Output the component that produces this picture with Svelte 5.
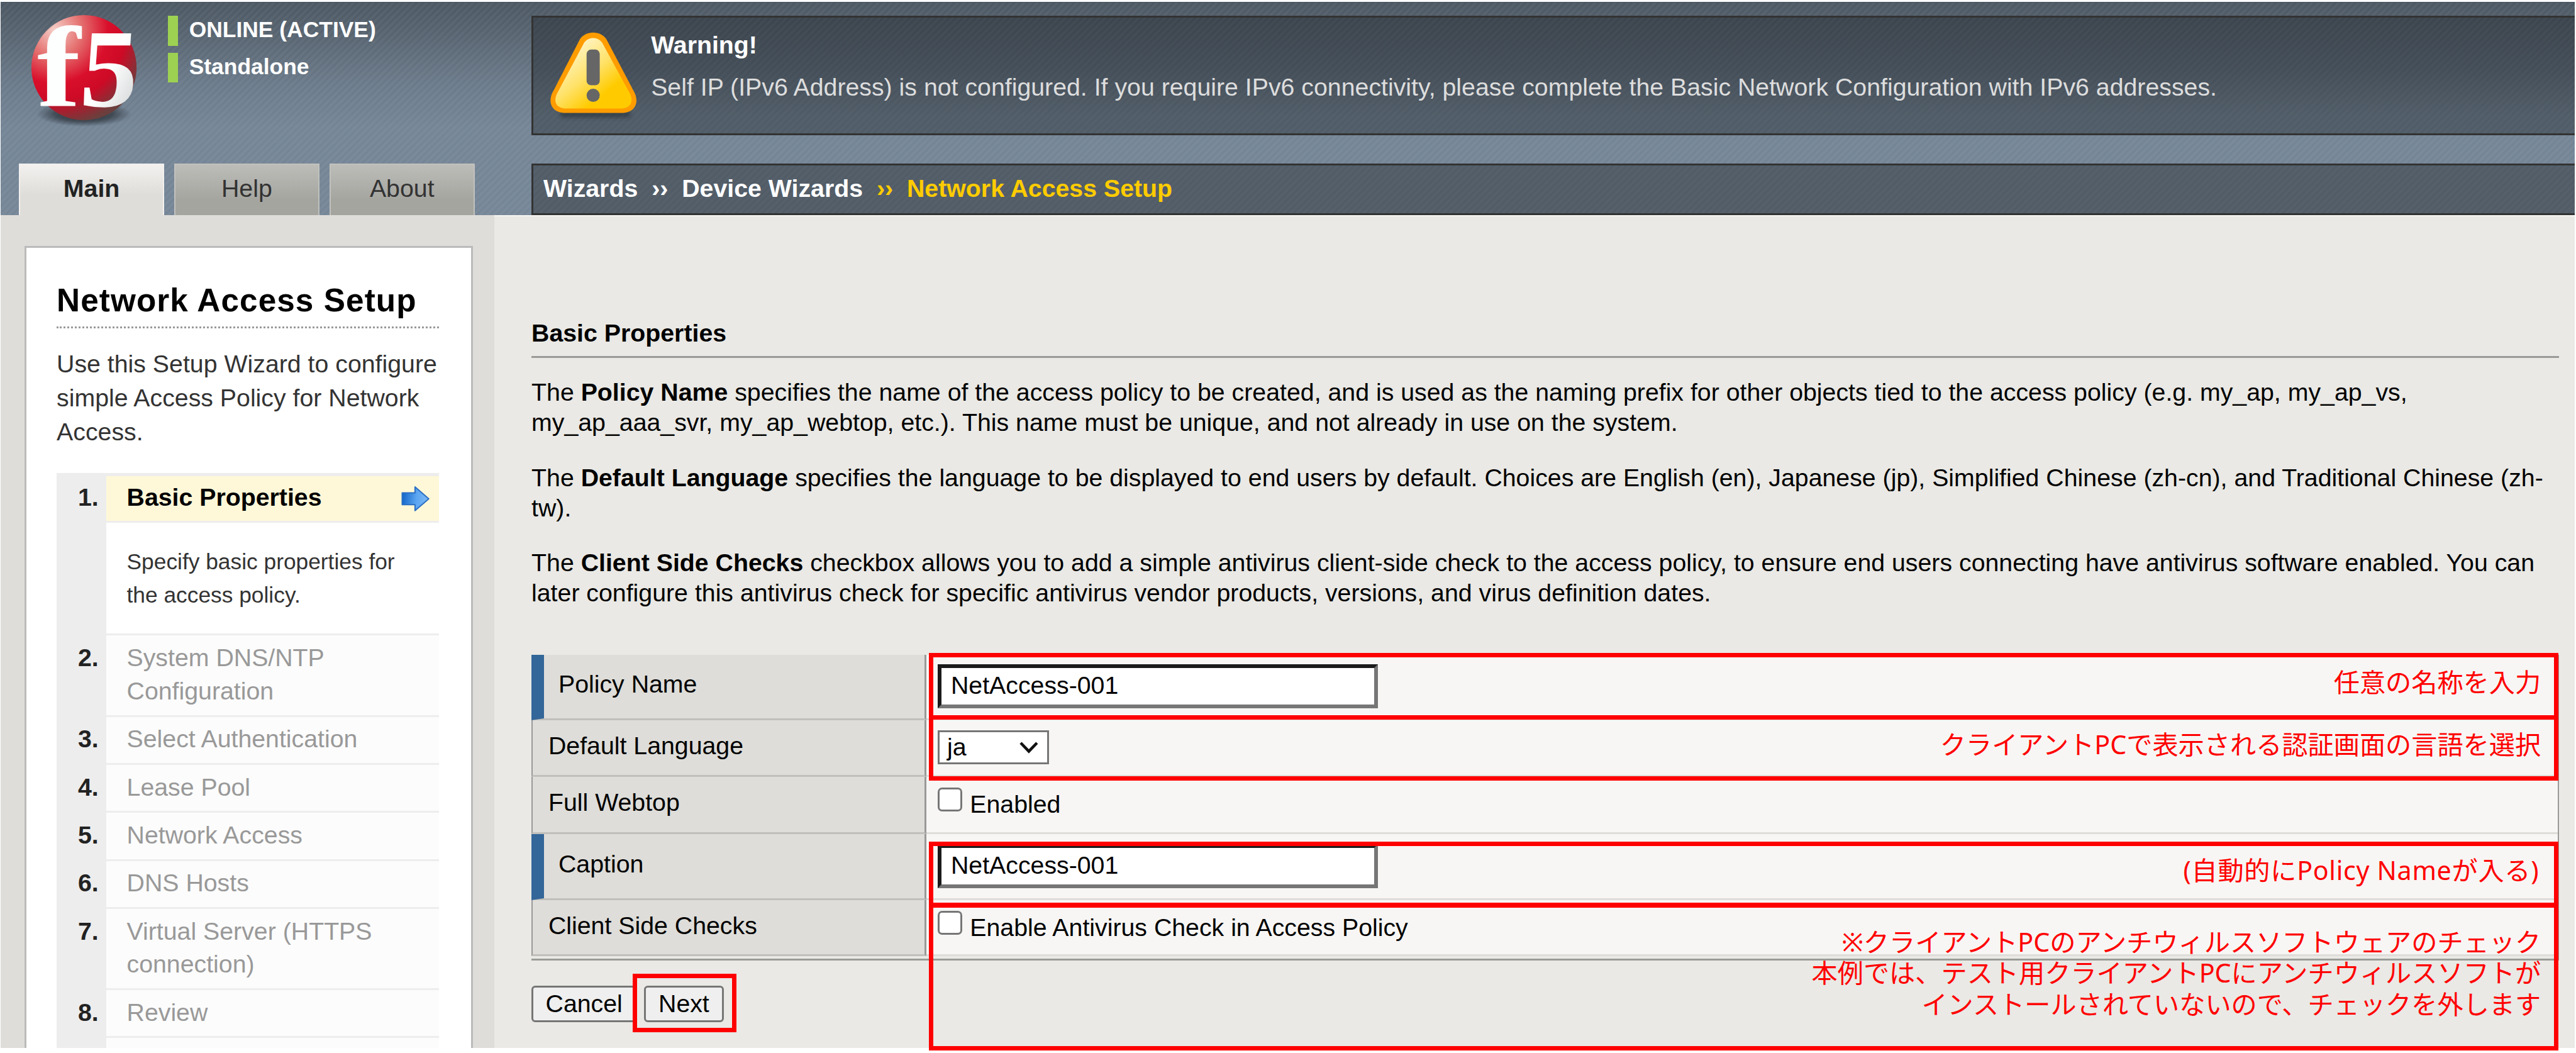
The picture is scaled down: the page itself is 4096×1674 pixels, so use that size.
<script>
  const statuses = ['ONLINE (ACTIVE)', 'Standalone'];
  const tabs = ['Main', 'Help', 'About'];

  const steps = [
    ['System DNS/NTP', 'Configuration'],
    ['Select Authentication'],
    ['Lease Pool'],
    ['Network Access'],
    ['DNS Hosts'],
    ['Virtual Server (HTTPS', 'connection)'],
    ['Review'],
    []
  ];

  const help = [
    {
      term: 'Policy Name',
      first: 'specifies the name of the access policy to be created, and is used as the naming prefix for other objects tied to the access policy (e.g. my_ap, my_ap_vs,',
      second: 'my_ap_aaa_svr, my_ap_webtop, etc.). This name must be unique, and not already in use on the system.'
    },
    {
      term: 'Default Language',
      first: 'specifies the language to be displayed to end users by default. Choices are English (en), Japanese (jp), Simplified Chinese (zh-cn), and Traditional Chinese (zh-',
      second: 'tw).'
    },
    {
      term: 'Client Side Checks',
      first: 'checkbox allows you to add a simple antivirus client-side check to the access policy, to ensure end users connecting have antivirus software enabled. You can',
      second: 'later configure this antivirus check for specific antivirus vendor products, versions, and virus definition dates.'
    }
  ];

  const fields = [
    { label: 'Policy Name', kind: 'text', value: 'NetAccess-001', required: true },
    { label: 'Default Language', kind: 'select', value: 'ja', size: 'mid' },
    { label: 'Full Webtop', kind: 'check', value: 'Enabled', size: 'mid2' },
    { label: 'Caption', kind: 'text', value: 'NetAccess-001', required: true },
    { label: 'Client Side Checks', kind: 'check', value: 'Enable Antivirus Check in Access Policy', size: 'last' }
  ];
</script>

<div class="page">
  <header>
    <div class="brand-col">
      <div class="brand">
        <svg class="logo" viewBox="0 0 180 180" width="180" height="180">
          <defs>
            <radialGradient id="ball" cx="0.22" cy="0.14" r="0.92">
              <stop offset="0" stop-color="#f6cfc9" />
              <stop offset="0.28" stop-color="#e4706f" />
              <stop offset="0.55" stop-color="#d90f2b" />
              <stop offset="0.74" stop-color="#cd0a26" />
              <stop offset="1" stop-color="#6b3f3d" />
            </radialGradient>
            <linearGradient id="letters" x1="0" y1="0" x2="1" y2="1">
              <stop offset="0.5" stop-color="#ffffff" />
              <stop offset="1" stop-color="#c9cccd" />
            </linearGradient>
            <radialGradient id="shade">
              <stop offset="0" stop-color="#20262c" stop-opacity="0.95" />
              <stop offset="0.6" stop-color="#20262c" stop-opacity="0.6" />
              <stop offset="1" stop-color="#20262c" stop-opacity="0" />
            </radialGradient>
          </defs>
          <ellipse cx="89" cy="158" rx="76" ry="20" fill="url(#shade)" />
          <circle cx="89" cy="84" r="84" fill="url(#ball)" />
          <g class="mark">
            <text transform="translate(14 146) scale(1.14 1)" font-size="183" fill="#fdfefe">f</text>
            <text transform="translate(80 146) skewX(-4) scale(1.03 1)" font-size="178" fill="url(#letters)">5</text>
          </g>
        </svg>
        <div class="statuses">
          {#each statuses as s}
            <div class="status">{s}</div>
          {/each}
        </div>
      </div>
      <nav class="tabs">
        {#each tabs as t, i}
          <span class="tab" class:active={i === 0}>{t}</span>
        {/each}
      </nav>
    </div>

    <div class="info-col">
      <div class="alert">
        <svg class="warn" viewBox="0 0 144 144" width="144" height="144">
          <defs>
            <linearGradient id="amber" x1="0.15" y1="0.1" x2="0.8" y2="0.85">
              <stop offset="0.1" stop-color="#fff3c0" />
              <stop offset="0.5" stop-color="#ffe26a" />
              <stop offset="0.85" stop-color="#ffcb00" />
            </linearGradient>
            <filter id="soft" x="-10%" y="-200%" width="120%" height="500%"><feGaussianBlur stdDeviation="3" /></filter>
          </defs>
          <rect x="18" y="128" width="112" height="9" rx="4" fill="#222a31" opacity="0.6" filter="url(#soft)" />
          <path d="M49 13 C58 -2 83 -2 92 13 L134 93 C146 112 138 129 119 130 L23 130 C4 129 -4 112 8 93 Z" fill="#ff9c00" />
          <path d="M56 18 C63 8 78 8 85 18 L128 97 C136 111 131 122 117 123 L25 123 C11 122 6 111 14 97 Z" fill="url(#amber)" />
          <rect x="60" y="29" width="21" height="57" rx="7" fill="#666666" />
          <circle cx="70.500" cy="102" r="10.500" fill="#666666" />
        </svg>
        <div class="alert-text">
          <strong>Warning!</strong>
          <span class="msg">Self IP (IPv6 Address) is not configured. If you require IPv6 connectivity, please complete the Basic Network Configuration with IPv6 addresses.</span>
        </div>
      </div>
      <div class="crumbs">
        <span>Wizards</span><span class="sep">››</span><span>Device Wizards</span><span class="sep current">››</span><span class="current">Network Access Setup</span>
      </div>
    </div>
  </header>

  <div class="body">
    <aside>
      <section class="panel">
        <h1>Network Access Setup</h1>
        <p class="intro">Use this Setup Wizard to configure<br />simple Access Policy for Network<br />Access.</p>
        <ol>
          <li class="open">
            <span class="num">1.</span>
            <div>
              <div class="now">
                <span>Basic Properties</span>
                <svg viewBox="0 0 46 42" width="46" height="42">
                  <defs>
                    <linearGradient id="blue" x1="0" y1="0.4" x2="1" y2="0.5">
                      <stop offset="0" stop-color="#1266c8" />
                      <stop offset="0.55" stop-color="#5ca6f2" />
                      <stop offset="1" stop-color="#7db8f3" />
                    </linearGradient>
                  </defs>
                  <path d="M1.500 11.500 H22 V2 L44 21 L22 40 V30.500 H1.500 Z" fill="url(#blue)" stroke="#2a6fc4" stroke-width="2" stroke-linejoin="round" />
                </svg>
              </div>
              <p class="desc">Specify basic properties for<br />the access policy.</p>
            </div>
          </li>
          {#each steps as lines, i}
            <li>
              <span class="num">{lines.length ? `${i + 2}.` : ''}</span>
              <div class="step">{#each lines as l}<div>{l}</div>{/each}</div>
            </li>
          {/each}
        </ol>
      </section>
    </aside>

    <main>
      <h2>Basic Properties</h2>
      {#each help as h}
        <p class="help">The <b>{h.term}</b> {h.first}<br />{h.second}</p>
      {/each}

      <div class="form">
        {#each fields as f}
          <div class="row {f.size ?? ''}">
            <div class="label" class:required={f.required}>{f.label}</div>
            <div class="value">
              {#if f.kind === 'text'}
                <div class="input">{f.value}</div>
              {:else if f.kind === 'select'}
                <div class="select">
                  <span>{f.value}</span>
                  <svg viewBox="0 0 32 20" width="32" height="20"><path d="M3 3 L16 16.500 L29 3" fill="none" stroke="#111" stroke-width="4.500" /></svg>
                </div>
              {:else}
                <div class="check"></div><span class="check-label">{f.value}</span>
              {/if}
            </div>
          </div>
        {/each}
      </div>

      <div class="actions">
        <span class="btn cancel">Cancel</span>
        <span class="btn">Next</span>
      </div>
    </main>
  </div>

  <div class="note n1">任意の名称を入力</div>
  <div class="note n2">クライアントPCで表示される認証画面の言語を選択</div>
  <div class="note n3">(自動的にPolicy Nameが入る)</div>
  <div class="note n4">※クライアントPCのアンチウィルスソフトウェアのチェック<br />本例では、テスト用クライアントPCにアンチウィルスソフトが<br />インストールされていないので、チェックを外します</div>
  <div class="note n5"></div>
</div>

<style>
  :global(body) { background: #fff; overflow: hidden; }
  .page {
    zoom: 0.99538;
    position: relative;
    box-sizing: border-box;
    width: 4115px;
    height: 1682px;
    padding: 3px 2px 8px 1px;
    overflow: hidden;
    background: #fff;
    font-family: 'Liberation Sans', Arial, sans-serif;
    font-size: 39.480px;
    color: #000;
    white-space: nowrap;
    display: flex;
    flex-direction: column;
  }
  .page :global(*) { box-sizing: border-box; }
  h1, h2, p, ol { margin: 0; padding: 0; }
  svg { display: block; flex: none; overflow: visible; }

  header {
    flex: none;
    height: 341px;
    display: grid;
    grid-template-columns: 848px 1fr;
    background:
      repeating-linear-gradient(135deg, rgba(255, 255, 255, 0.045) 0 3px, rgba(255, 255, 255, 0) 4px 6.500px, rgba(255, 255, 255, 0.045) 7.500px),
      linear-gradient(#4c5863 0, #5b6875 65px, #6b7a8a 130px, #748596 200px, #758697 341px);
    border-top: 1.100px solid #48535d;
  }
  .brand-col { display: flex; flex-direction: column; justify-content: space-between; }
  .brand { display: flex; padding: 20px 0 0 44px; }
  .mark { font-family: 'Liberation Serif', 'Times New Roman', serif; font-weight: bold; }
  .statuses { display: flex; flex-direction: column; gap: 11px; padding: 1px 0 0 43px; }
  .status {
    height: 48px;
    line-height: 45px;
    padding-left: 18px;
    border-left: 16.100px solid #9dd152;
    color: #fff;
    font-weight: bold;
    font-size: 35.600px;
  }
  .tabs { display: flex; gap: 15.500px; padding-left: 29px; }
  .tab {
    width: 232.500px;
    height: 83px;
    line-height: 74.500px;
    text-align: center;
    color: #333;
    border: 2.100px solid #c2c1bd;
    border-bottom: none;
    background: linear-gradient(#bcbcb8, #a5a5a0 70%);
  }
  .tab.active {
    font-weight: bold;
    color: #222;
    border-color: #f1f0ee;
    background: linear-gradient(#f2f1ef, #deddd9 60%);
  }
  .info-col { display: flex; flex-direction: column; justify-content: space-between; padding-top: 21px; }
  .alert {
    height: 191px;
    display: flex;
    border: 3.050px solid #333;
    border-right: none;
    background:
      repeating-linear-gradient(135deg, rgba(255, 255, 255, 0.025) 0 3px, rgba(255, 255, 255, 0) 4px 6.500px, rgba(255, 255, 255, 0.025) 7.500px),
      linear-gradient(#3c454e, #444e58 45%, #505c67 85%);
    padding: 22.500px 0 0 25px;
  }
  .alert-text { display: flex; flex-direction: column; padding: 0 0 0 19px; color: #fff; }
  .alert-text strong { line-height: 44px; }
  .alert-text .msg { line-height: 48px; margin-top: 21.500px; color: #ddd; }
  .crumbs {
    height: 83px;
    display: flex;
    border: 3.050px solid #333;
    border-right: none;
    padding-left: 16px;
    line-height: 73.500px;
    font-weight: bold;
    color: #fff;
    background:
      repeating-linear-gradient(135deg, rgba(255, 255, 255, 0.025) 0 3px, rgba(255, 255, 255, 0) 4px 6.500px, rgba(255, 255, 255, 0.025) 7.500px),
      #515c67;
  }
  .sep { padding: 0 22px; }
  .current { color: #fc0; }

  .body { flex: 1; min-height: 0; display: flex; background: #eae9e5; }
  aside { width: 789px; background: #deddd9; padding: 49px 35px 0 38px; overflow: hidden; }
  .panel { height: 1400px; background: #fff; border: 3.050px solid #bbb; padding: 54.500px 51px 0 48.500px; }
  h1 {
    font-size: 51.500px;
    line-height: 60px;
    letter-spacing: 1.100px;
    padding-bottom: 11px;
    border-bottom: 3.050px dotted #999;
  }
  .intro { margin-top: 30.500px; line-height: 53.850px; color: #333; }
  ol { list-style: none; margin-top: 39px; border-top: 3.050px solid #ededed; }
  li { display: grid; grid-template-columns: 79px 1fr; background: #ededed; }
  .num { text-align: right; padding: 11.800px 12px 0 0; line-height: 53px; font-weight: bold; color: #222; }
  .now {
    display: flex;
    align-items: center;
    justify-content: space-between;
    height: 76.500px;
    padding: 0 14px 0 33px;
    border-top: 2.100px solid #ededed;
    border-bottom: 3.050px solid #ededed;
    background: #fff8d8;
    font-weight: bold;
  }
  .now span { line-height: 53px; padding-bottom: 4px; }
  .desc { background: #fff; font-size: 35.500px; line-height: 52.800px; padding: 36px 0 35.500px 33px; color: #333; }
  .open .num { padding-top: 9.500px; }
  .step {
    border-top: 3.050px solid #ededed;
    background: #fcfcfc;
    color: #999;
    line-height: 53px;
    padding: 8.800px 0 11.900px 33px;
    min-height: 60px;
  }

  main { flex: 1; padding: 163px 25px 0 59px; border-top: 2.100px solid #f6f5f3; }
  h2 { font-size: 39.480px; line-height: 48px; padding-bottom: 13px; border-bottom: 3.050px solid #999; margin-bottom: 30px; margin-top: -1px; }
  .help { line-height: 48.300px; margin-bottom: 39.300px; }
  .form { margin-top: 75px; border-right: 2.100px solid #999; border-bottom: 3.050px solid #999b96; padding-bottom: 4px; }
  .row { display: grid; grid-template-columns: 631px 1fr; height: 105px; }
  .row.mid { height: 90px; }
  .row.mid2 { height: 92px; }
  .row.last { height: 89.500px; }
  .label {
    background: #deddd9;
    border-left: 2.100px solid #999;
    border-right: 3.050px solid #999;
    border-bottom: 3.050px solid #c0bfbb;
    line-height: 48px;
    padding: 17px 0 0 25px;
  }
  .label.required { border-left: 20.100px solid #369; padding: 24px 0 0 23px; }
  .value { display: flex; align-items: flex-start; background: #f7f6f4; border-bottom: 3.050px solid #deddd9; padding: 16px 0 0 18px; }
  .input {
    width: 703px;
    height: 70px;
    background: #fff;
    border: 6.050px solid;
    border-color: #1b1b1b #767676 #767676 #1b1b1b;
    padding-left: 15px;
    line-height: 56px;
  }
  .select {
    width: 178px;
    height: 54px;
    display: flex;
    align-items: center;
    justify-content: space-between;
    background: #fff;
    border: 3.050px solid #767676;
    padding: 0 13px 0 12px;
    line-height: 48px;
  }
  .check { width: 39px; height: 39px; margin-top: 1px; background: #fff; border: 3.050px solid #767676; border-radius: 7px; }
  .check-label { padding-left: 12.500px; line-height: 48px; margin-top: 4.500px; }
  .actions { display: flex; gap: 12px; margin-top: 40px; }
  .btn {
    height: 58.500px;
    width: 127px;
    line-height: 50.500px;
    text-align: center;
    background: #efefef;
    border: 3.050px solid #767676;
    border-radius: 6px;
  }
  .btn.cancel { width: 168px; }

  /* callouts laid over the form */
  .note {
    position: absolute;
    border: 7.050px solid #f00;
    left: 1484px;
    width: 2603px;
    padding-right: 21px;
    text-align: right;
    color: #f00;
    font-family: 'Noto Sans', 'Noto Sans CJK JP', sans-serif;
    font-size: 41.400px;
    line-height: 49.400px;
  }
  .n1 { top: 1043px; height: 106px; padding-top: 15px; }
  .n2 { top: 1142px; height: 105px; padding-top: 15px; }
  .n3 { top: 1344px; height: 105px; padding-top: 14px; padding-right: 24px; letter-spacing: 0.700px; }
  .n4 { top: 1442.500px; height: 235.500px; padding-top: 30.500px; }
  .n5 { left: 1011px; top: 1555px; width: 165.500px; height: 94px; }
</style>
